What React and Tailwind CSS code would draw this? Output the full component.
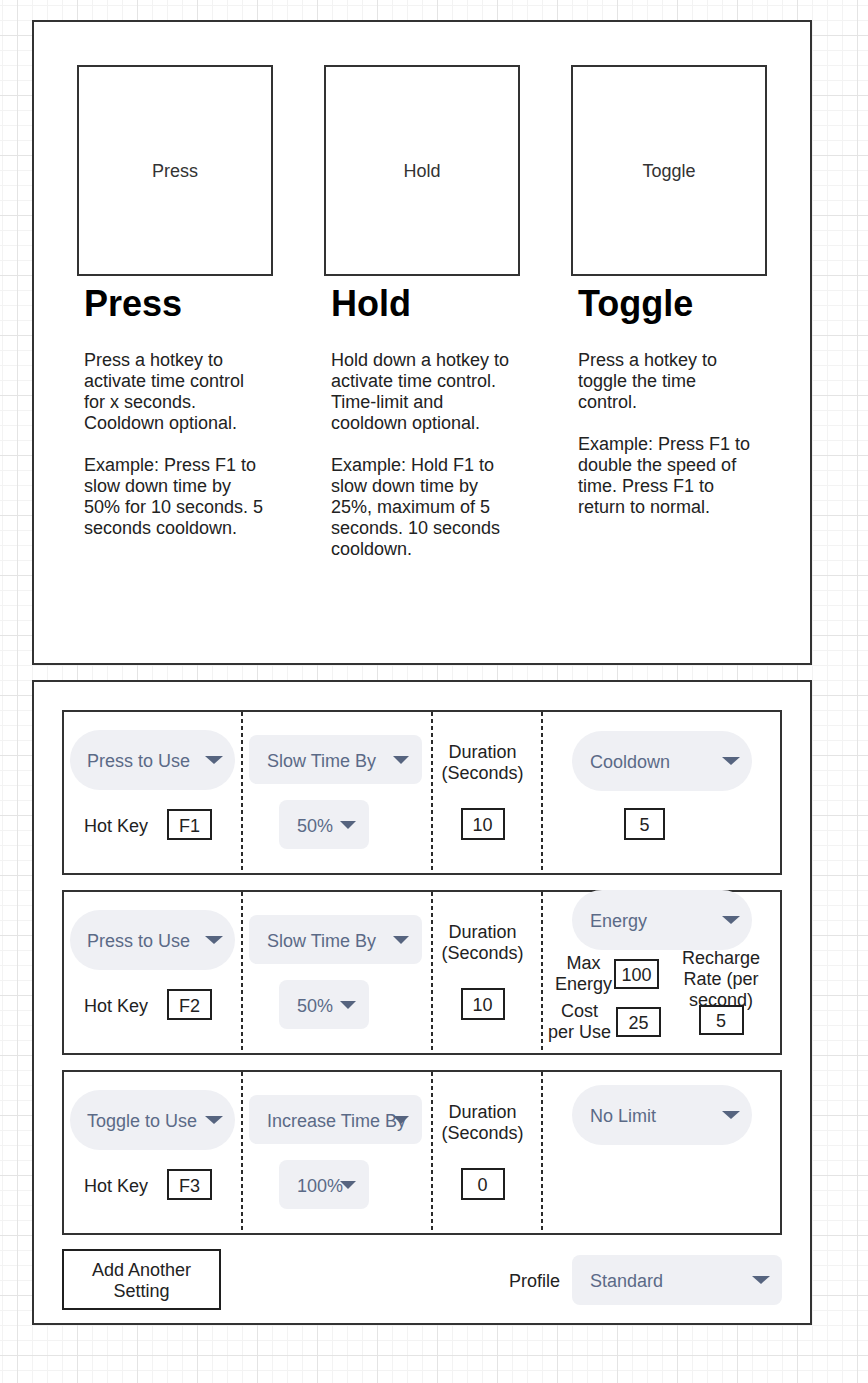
import React from "react";

const Tri = ({ w = 18, h = 8 }) => (
  <svg width={w} height={h} viewBox={`0 0 ${w} ${h}`} className="block">
    <polygon points={`0,0 ${w},0 ${w / 2},${h}`} fill="#56647f" />
  </svg>
);

function Dropdown({ label, className, triClass, tw = 18, th = 8 }) {
  return (
    <div className={"relative flex items-center bg-[#eff0f4] pt-[3px] text-[18px] text-[#5b6a87] " + className}>
      <span className="whitespace-nowrap">{label}</span>
      <span className={"absolute top-1/2 -translate-y-1/2 " + triClass}>
        <Tri w={tw} h={th} />
      </span>
    </div>
  );
}

function Box({ v, className }) {
  return (
    <div className={"flex shrink-0 items-center justify-center border-2 border-[#1f1f1f] pt-[3px] text-[18px] text-[#222] " + className}>
      {v}
    </div>
  );
}

const Divider = () => (
  <div className="w-[2px] shrink-0 bg-[image:linear-gradient(to_bottom,#2a2a2a_4px,transparent_4px)] [background-size:2px_7px]" />
);

const cards = [
  {
    box: "Press",
    title: "Press",
    lines: [
      "Press a hotkey to",
      "activate time control",
      "for x seconds.",
      "Cooldown optional.",
      "",
      "Example: Press F1 to",
      "slow down time by",
      "50% for 10 seconds. 5",
      "seconds cooldown.",
    ],
  },
  {
    box: "Hold",
    title: "Hold",
    lines: [
      "Hold down a hotkey to",
      "activate time control.",
      "Time-limit and",
      "cooldown optional.",
      "",
      "Example: Hold F1 to",
      "slow down time by",
      "25%, maximum of 5",
      "seconds. 10 seconds",
      "cooldown.",
    ],
  },
  {
    box: "Toggle",
    title: "Toggle",
    lines: [
      "Press a hotkey to",
      "toggle the time",
      "control.",
      "",
      "Example: Press F1 to",
      "double the speed of",
      "time. Press F1 to",
      "return to normal.",
    ],
  },
];

function Row({ use, key1, action, pct, dur, col4 }) {
  return (
    <div className="flex h-[165px] border-2 border-[#333] bg-white">
      <div className="flex w-[177px] shrink-0 flex-col">
        <Dropdown
          label={use}
          className="ml-[6px] mt-[18px] h-[60px] w-[165px] rounded-full pl-[17px]"
          triClass="right-[12px]"
        />
        <div className="mt-[19px] flex items-center pl-[20px]">
          <span className="pt-[3px] text-[18px] text-[#222]">Hot Key</span>
          <Box v={key1} className="ml-[19px] h-[31px] w-[45px]" />
        </div>
      </div>
      <Divider />
      <div className="flex w-[188px] shrink-0 flex-col">
        <Dropdown
          label={action}
          className="ml-[6px] mt-[23px] h-[49px] w-[173px] rounded-lg pl-[18px]"
          triClass="right-[13px]"
          tw={16}
        />
        <Dropdown
          label={pct}
          className="ml-[36px] mt-[16px] h-[49px] w-[90px] rounded-lg pl-[18px]"
          triClass="right-[13px]"
          tw={16}
        />
      </div>
      <Divider />
      <div className="flex w-[108px] shrink-0 flex-col items-center pr-[9px]">
        <div className="mt-[30px] text-center text-[18px] leading-[21px] text-[#222]">
          Duration
          <br />
          (Seconds)
        </div>
        <Box v={dur} className="mt-[24px] h-[32px] w-[44px]" />
      </div>
      <Divider />
      <div className="flex w-[237px] shrink-0 flex-col">{col4}</div>
    </div>
  );
}

export default function App() {
  return (
    <div className="min-h-[1383px] w-full bg-white pl-[32px] pt-[20px] font-['Liberation_Sans',Arial,sans-serif] [background-image:linear-gradient(to_right,#e4e4e4_1px,transparent_1px),linear-gradient(to_bottom,#e4e4e4_1px,transparent_1px),linear-gradient(to_right,#f3f3f3_1px,transparent_1px),linear-gradient(to_bottom,#f3f3f3_1px,transparent_1px)] [background-size:60px_60px,60px_60px,15px_15px,15px_15px] [background-position:17px_35px]">
      {/* Top panel */}
      <div className="h-[645px] w-[780px] border-2 border-[#333] bg-white px-[43px] pt-[43px]">
        <div className="grid grid-cols-[196px_196px_196px] gap-x-[51px]">
          {cards.map((c) => (
            <div key={c.title} className="flex flex-col">
              <div className="flex h-[211px] w-full items-center justify-center border-2 border-[#333] pt-[2px] text-[18px] text-[#333]">
                {c.box}
              </div>
              <div className="mt-[8px] pl-[7px] text-[36px] font-bold leading-[40px] text-black">{c.title}</div>
              <div className="mt-[26px] pl-[7px] text-[18px] leading-[21px] text-[#222]">
                {c.lines.map((l, i) =>
                  l ? (
                    <div key={i} className="whitespace-nowrap">
                      {l}
                    </div>
                  ) : (
                    <div key={i} className="h-[21px]" />
                  )
                )}
              </div>
            </div>
          ))}
        </div>
      </div>

      {/* Bottom panel */}
      <div className="mt-[15px] h-[645px] w-[780px] border-2 border-[#333] bg-white px-[28px] pt-[28px]">
        <div className="flex flex-col gap-[15px]">
          <Row
            use="Press to Use"
            key1="F1"
            action="Slow Time By"
            pct="50%"
            dur="10"
            col4={
              <>
                <Dropdown
                  label="Cooldown"
                  className="ml-[29px] mt-[19px] h-[60px] w-[180px] rounded-full pl-[18px]"
                  triClass="right-[12px]"
                />
                <Box v="5" className="ml-[81px] mt-[17px] h-[32px] w-[41px]" />
              </>
            }
          />
          <Row
            use="Press to Use"
            key1="F2"
            action="Slow Time By"
            pct="50%"
            dur="10"
            col4={
              <>
                <Dropdown
                  label="Energy"
                  className="ml-[29px] mt-[-2px] h-[60px] w-[180px] rounded-full pl-[18px]"
                  triClass="right-[12px]"
                />
                <div className="flex items-start">
                  <div className="flex w-[119px] shrink-0 flex-col">
                    <div className="mt-[3px] flex items-center">
                      <div className="ml-[12px] text-center text-[18px] leading-[21px] text-[#222]">
                        Max
                        <br />
                        Energy
                      </div>
                      <Box v="100" className="ml-[2px] h-[30px] w-[45px]" />
                    </div>
                    <div className="mt-[6px] flex items-center">
                      <div className="ml-[5px] whitespace-nowrap text-center text-[18px] leading-[21px] text-[#222]">
                        Cost
                        <br />
                        per Use
                      </div>
                      <Box v="25" className="ml-[5px] h-[30px] w-[45px]" />
                    </div>
                  </div>
                  <div className="ml-[20px] mt-[-2px] flex w-[78px] shrink-0 flex-col items-center">
                    <div className="whitespace-nowrap text-center text-[18px] leading-[21px] text-[#222]">
                      Recharge
                      <br />
                      Rate (per
                      <br />
                      second)
                    </div>
                    <Box v="5" className="mt-[-6px] h-[30px] w-[45px]" />
                  </div>
                </div>
              </>
            }
          />
          <Row
            use="Toggle to Use"
            key1="F3"
            action="Increase Time By"
            pct="100%"
            dur="0"
            col4={
              <Dropdown
                label="No Limit"
                className="ml-[29px] mt-[13px] h-[60px] w-[180px] rounded-full pl-[18px]"
                triClass="right-[12px]"
              />
            }
          />
        </div>
        <div className="mt-[14px] flex items-center">
          <div className="flex h-[61px] w-[159px] items-center justify-center border-2 border-[#1f1f1f] pt-[3px] text-center text-[18px] leading-[21px] text-[#222]">
            Add Another
            <br />
            Setting
          </div>
          <span className="ml-auto mr-[12px] pt-[3px] text-[18px] text-[#222]">Profile</span>
          <Dropdown
            label="Standard"
            className="h-[50px] w-[210px] rounded-lg pl-[18px]"
            triClass="right-[12px]"
          />
        </div>
      </div>
    </div>
  );
}
